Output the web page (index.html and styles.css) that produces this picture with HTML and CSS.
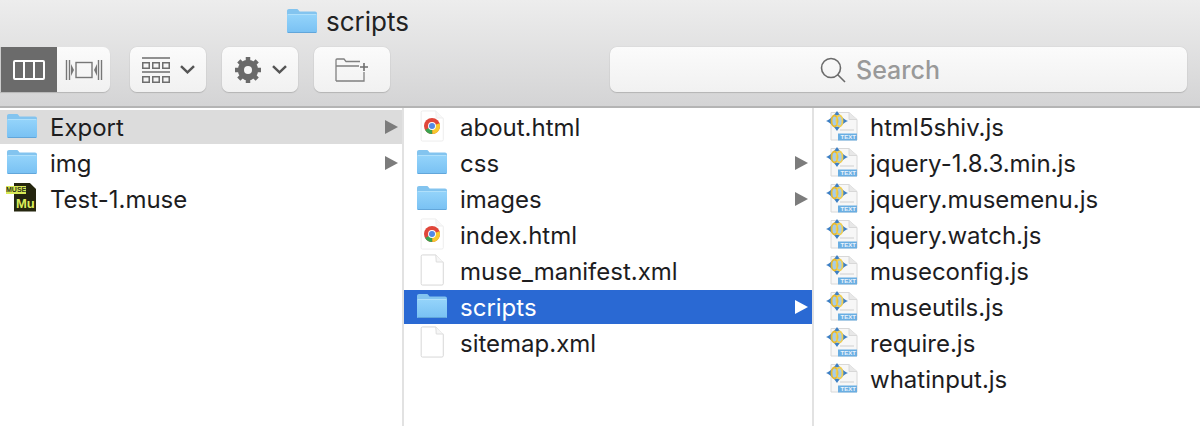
FILE: index.html
```html
<!DOCTYPE html>
<html lang="en">
<head>
  <meta charset="UTF-8">
  <meta name="viewport" content="width=device-width, initial-scale=1.0">
  <title>scripts</title>
  <link rel="stylesheet" href="styles.css">
</head>
<body>

  <!-- shared icons -->
  <svg class="defs" width="0" height="0">
    <defs>
      <linearGradient id="folderFill" x1="0" y1="0" x2="0" y2="1">
        <stop offset="0" stop-color="#93d3fa"/>
        <stop offset="1" stop-color="#79c1f3"/>
      </linearGradient>
      <symbol id="folder" viewBox="0 0 30 24">
        <path d="M0 2C0 .8 .8 0 2 0H9.500C10.500 0 11 .4 11.600 1.200L12.600 2.500H28C29.200 2.500 30 3.300 30 4.500V22.500C30 23.500 29.400 24 28.400 24H1.600C.6 24 0 23.500 0 22.500Z" fill="#83c4ef"/>
        <path d="M0 6H30V22.500C30 23.300 29.400 23.700 28.400 23.700H1.600C.6 23.700 0 23.300 0 22.500Z" fill="url(#folderFill)"/>
        <path d="M.5 5.500H29.500" stroke="#b0e0fb" stroke-width="1"/>
        <path d="M1 23.500H29" stroke="#62a6da" stroke-width="1"/>
      </symbol>
      <symbol id="page" viewBox="0 0 26 34">
        <path d="M3 1H17L25 9V31.500C25 32.500 24.300 33 23.500 33H3C2 33 1.500 32.500 1.500 31.500V2.500C1.500 1.500 2 1 3 1Z" fill="#fff" stroke="#d4d4d4"/>
        <path d="M17 1L17.500 8.500H25" fill="#f6f6f6" stroke="#dcdcdc"/>
      </symbol>
      <symbol id="chrome" viewBox="0 0 26 34">
        <path d="M3 1H17L25 9V31.500C25 32.500 24.300 33 23.500 33H3C2 33 1.500 32.500 1.500 31.500V2.500C1.500 1.500 2 1 3 1Z" fill="#fff" stroke="#ececec"/>
        <path d="M17 1L17.500 8.500H25" fill="#f8f8f8" stroke="#eee"/>
        <circle cx="13" cy="17" r="8.500" fill="#e0463a"/>
        <path d="M13 17L5.700 21.300A8.500 8.500 0 0 0 13.500 25.500Z" fill="#3aa350"/>
        <path d="M13 17L13.500 25.500A8.500 8.500 0 0 0 21 14Z" fill="#f7c82e"/>
        <circle cx="13" cy="17" r="4.200" fill="#fff"/>
        <circle cx="13" cy="17" r="3.200" fill="#5189e6"/>
      </symbol>
      <symbol id="script" viewBox="0 0 32 30">
        <path d="M5 1.500H23L31 8.500V29H5Z" fill="#f7f7f7" stroke="#d8d8d8"/>
        <path d="M23 1.500V8.500H31" fill="#e8e8e8" stroke="#d8d8d8"/>
        <path d="M14 19H28" stroke="#d6d6d6" stroke-width="1.200"/>
        <path d="M12 22.500H31V29.500H12Z" fill="#6aaee2"/>
        <text x="14.500" y="28.300" class="tag-text">TEXT</text>
        <path d="M0 10C3 9 8 5 11 0C14 5 19 9 22 10C19 11 14 15 11 20C8 15 3 11 0 10Z" fill="#3d7fc4"/>
        <circle cx="11" cy="10" r="6" fill="#a6cdea"/>
        <ellipse cx="8.500" cy="10" rx="3" ry="5.500" fill="none" stroke="#e8b92e" stroke-width="1.800"/>
        <ellipse cx="13.500" cy="10" rx="3" ry="5.500" fill="none" stroke="#f1cf52" stroke-width="1.800"/>
      </symbol>
    </defs>
  </svg>

  <div class="window">
    <header class="toolbar">
      <div class="title">
        <svg class="title-icon"><use href="#folder"/></svg>
        <span>scripts</span>
      </div>
      <div class="controls">
        <div class="segment">
          <div class="seg seg-on">
            <svg width="34" height="22" viewBox="0 0 34 22" fill="none" stroke="#fff" stroke-width="2">
              <rect x="2" y="2" width="30" height="18" rx="1"/>
              <path d="M12 2V20M22 2V20"/>
            </svg>
          </div>
          <div class="seg">
            <svg width="38" height="22" viewBox="0 0 38 22" fill="none" stroke="#777" stroke-width="1.400">
              <path d="M1.500 1V21M4.500 1V21M33.500 1V21M36.500 1V21"/>
              <rect x="11" y="3.500" width="16" height="15"/>
              <path d="M6 5L9 11L6 17Z" fill="#777" stroke="none"/>
              <path d="M32 5L29 11L32 17Z" fill="#777" stroke="none"/>
            </svg>
          </div>
        </div>

        <div class="btn btn-first">
          <svg width="28" height="26" viewBox="0 0 28 26" fill="none" stroke="#6e6e6e" stroke-width="1.500">
            <path d="M0 1H28M0 15H28"/>
            <rect x=".75" y="5.750" width="6.500" height="5.500"/>
            <rect x="10.750" y="5.750" width="6.500" height="5.500"/>
            <rect x="20.750" y="5.750" width="6.500" height="5.500"/>
            <rect x=".75" y="19.750" width="6.500" height="5.500"/>
            <rect x="10.750" y="19.750" width="6.500" height="5.500"/>
            <rect x="20.750" y="19.750" width="6.500" height="5.500"/>
          </svg>
          <svg class="chev" width="15" height="9" viewBox="0 0 15 9"><path d="M1 1.200L7.500 7.300L14 1.200" fill="none" stroke="#555" stroke-width="2.500"/></svg>
        </div>

        <div class="btn">
          <svg width="28" height="28" viewBox="0 0 28 28">
            <circle cx="14" cy="14" r="7" fill="none" stroke="#6a6a6a" stroke-width="6.500"/>
            <path d="M14 1V27M1 14H27M4.800 4.800L23.200 23.200M23.200 4.800L4.800 23.200" stroke="#6a6a6a" stroke-width="4.500"/>
            <circle cx="14" cy="14" r="4" fill="#f6f6f6"/>
          </svg>
          <svg class="chev" width="15" height="9" viewBox="0 0 15 9"><path d="M1 1.200L7.500 7.300L14 1.200" fill="none" stroke="#555" stroke-width="2.500"/></svg>
        </div>

        <div class="btn">
          <svg width="34" height="24" viewBox="0 0 34 24" fill="none" stroke="#808080" stroke-width="1.300">
            <path d="M1 23V2C1 1.300 1.400 1 2 1H9L11 3.500H25M1 8H24M29 14V23H1"/>
            <path d="M29 5V13M25 9H33" stroke="#6e6e6e" stroke-width="1.600"/>
          </svg>
        </div>

        <div class="search">
          <svg width="26" height="26" viewBox="0 0 26 26" fill="none" stroke="#6b6b6b" stroke-width="1.600">
            <circle cx="11" cy="11" r="9.500"/>
            <path d="M17.500 17.500L25 25"/>
          </svg>
          <span>Search</span>
        </div>
      </div>
    </header>

    <main class="browser">
      <section class="column col-one">
        <div class="row row-muted"><svg class="ico"><use href="#folder"/></svg><span class="name">Export</span><i class="arrow"></i></div>
        <div class="row"><svg class="ico"><use href="#folder"/></svg><span class="name">img</span><i class="arrow"></i></div>
        <div class="row">
          <div class="muse-ico"><b class="muse-tag">MUSE</b><b class="muse-mu">Mu</b></div>
          <span class="name">Test-1.muse</span>
        </div>
      </section>

      <section class="column col-two">
        <div class="row"><svg class="ico ico-page"><use href="#chrome"/></svg><span class="name">about.html</span></div>
        <div class="row"><svg class="ico"><use href="#folder"/></svg><span class="name">css</span><i class="arrow"></i></div>
        <div class="row"><svg class="ico"><use href="#folder"/></svg><span class="name">images</span><i class="arrow"></i></div>
        <div class="row"><svg class="ico ico-page"><use href="#chrome"/></svg><span class="name">index.html</span></div>
        <div class="row"><svg class="ico ico-page"><use href="#page"/></svg><span class="name">muse_manifest.xml</span></div>
        <div class="row row-active"><svg class="ico"><use href="#folder"/></svg><span class="name">scripts</span><i class="arrow"></i></div>
        <div class="row"><svg class="ico ico-page"><use href="#page"/></svg><span class="name">sitemap.xml</span></div>
      </section>

      <section class="column col-three">
        <div class="row"><svg class="ico ico-script"><use href="#script"/></svg><span class="name">html5shiv.js</span></div>
        <div class="row"><svg class="ico ico-script"><use href="#script"/></svg><span class="name">jquery-1.8.3.min.js</span></div>
        <div class="row"><svg class="ico ico-script"><use href="#script"/></svg><span class="name">jquery.musemenu.js</span></div>
        <div class="row"><svg class="ico ico-script"><use href="#script"/></svg><span class="name">jquery.watch.js</span></div>
        <div class="row"><svg class="ico ico-script"><use href="#script"/></svg><span class="name">museconfig.js</span></div>
        <div class="row"><svg class="ico ico-script"><use href="#script"/></svg><span class="name">museutils.js</span></div>
        <div class="row"><svg class="ico ico-script"><use href="#script"/></svg><span class="name">require.js</span></div>
        <div class="row"><svg class="ico ico-script"><use href="#script"/></svg><span class="name">whatinput.js</span></div>
      </section>
    </main>
  </div>

</body>
</html>
```

FILE: styles.css
```css
* {
  margin: 0;
  padding: 0;
  box-sizing: border-box;
}

html, body {
  height: 100%;
  overflow: hidden;
  font-family: Inter, "Liberation Sans", Arial, sans-serif;
  color: #1d1d1f;
  background: #fff;
}

.defs {
  display: block;
  height: 0;
}

.tag-text {
  font-family: "Liberation Sans", Arial, sans-serif;
  font-size: 6px;
  font-weight: bold;
  fill: #eaf4fc;
}

.window {
  height: 426px;
  display: flex;
  flex-direction: column;
}

.toolbar {
  height: 108px;
  flex-shrink: 0;
  padding-top: 6px;
  background: linear-gradient(#ededed, #d4d4d5);
  border-bottom: 2px solid #b4b4b4;
}

.title {
  height: 30px;
  display: flex;
  align-items: center;
  gap: 9px;
  padding-left: 287px;
  font-size: 26px;
  color: #222;
}

.title-icon {
  width: 30px;
  height: 24px;
}

.controls {
  display: flex;
  margin-top: 11px;
}

.segment {
  width: 110px;
  height: 45px;
  display: flex;
  border-radius: 0 7px 7px 0;
  background: linear-gradient(#fbfbfb, #f1f1f1);
  box-shadow: 0 1px 1px #b5b5b5;
  overflow: hidden;
}

.seg {
  width: 53px;
  display: flex;
  align-items: center;
  justify-content: center;
}

.seg-on {
  width: 57px;
  border-left: 1px solid #ccc;
  background: #6b6b6b;
}

.btn {
  width: 76px;
  height: 45px;
  margin-left: 16px;
  display: flex;
  align-items: center;
  justify-content: center;
  gap: 10px;
  border-radius: 7px;
  background: linear-gradient(#fbfbfb, #f1f1f1);
  box-shadow: 0 0 1px #b0b0b0, 0 1px 1px #b5b5b5;
}

.btn-first {
  margin-left: 20px;
}

.chev {
  flex-shrink: 0;
}

.search {
  width: 577px;
  height: 45px;
  margin-left: 220px;
  padding-right: 37px;
  display: flex;
  align-items: center;
  justify-content: center;
  gap: 10px;
  border-radius: 7px;
  background: linear-gradient(#fbfbfb, #f1f1f1);
  box-shadow: 0 0 1px #b0b0b0, 0 1px 1px #b5b5b5;
  font-size: 25px;
  font-weight: 500;
  color: #999;
}

.browser {
  flex: 1;
  display: flex;
  min-height: 0;
}

.column {
  padding-top: 2px;
  border-right: 2px solid #e2e2e2;
}

.col-one {
  width: 404px;
}

.col-two {
  width: 410px;
}

.col-three {
  flex: 1;
  border-right: 0;
}

.row {
  height: 34px;
  margin-bottom: 2px;
  display: flex;
  align-items: center;
  padding-left: 6px;
  font-size: 24px;
}

.col-two .row,
.col-three .row {
  padding-left: 12px;
}

.ico {
  width: 32px;
  height: 24px;
  margin-top: -3px;
  flex-shrink: 0;
}

.ico-page {
  height: 32px;
}

.ico-script {
  height: 30px;
}

.name {
  flex: 1;
  margin-left: 12px;
  white-space: nowrap;
}

.arrow {
  width: 0;
  height: 0;
  margin-right: 4px;
  border-left: 13px solid #7c7c7c;
  border-top: 7px solid transparent;
  border-bottom: 7px solid transparent;
}

.row-muted {
  background: #dcdcdc;
}

.row-active {
  background: #2a69d3;
  color: #fff;
}

.row-active .arrow {
  border-left-color: #fff;
}

.muse-ico {
  position: relative;
  width: 32px;
  height: 30px;
  margin-top: -3px;
  flex-shrink: 0;
}

.muse-ico::before {
  content: "";
  position: absolute;
  left: 8px;
  top: 0;
  width: 22px;
  height: 29px;
  background: #25260f;
  clip-path: polygon(0 0, 70% 0, 100% 22%, 100% 100%, 0 100%);
}

.muse-tag {
  position: absolute;
  left: 0;
  top: 3px;
  width: 20px;
  height: 8px;
  background: #d9ea55;
  color: #33351a;
  font-family: "Liberation Sans", Arial, sans-serif;
  font-size: 7px;
  line-height: 8px;
  text-align: center;
}

.muse-mu {
  position: absolute;
  left: 10px;
  top: 13px;
  color: #dcee5a;
  font-family: "Liberation Sans", Arial, sans-serif;
  font-size: 13px;
  line-height: 16px;
}
```
